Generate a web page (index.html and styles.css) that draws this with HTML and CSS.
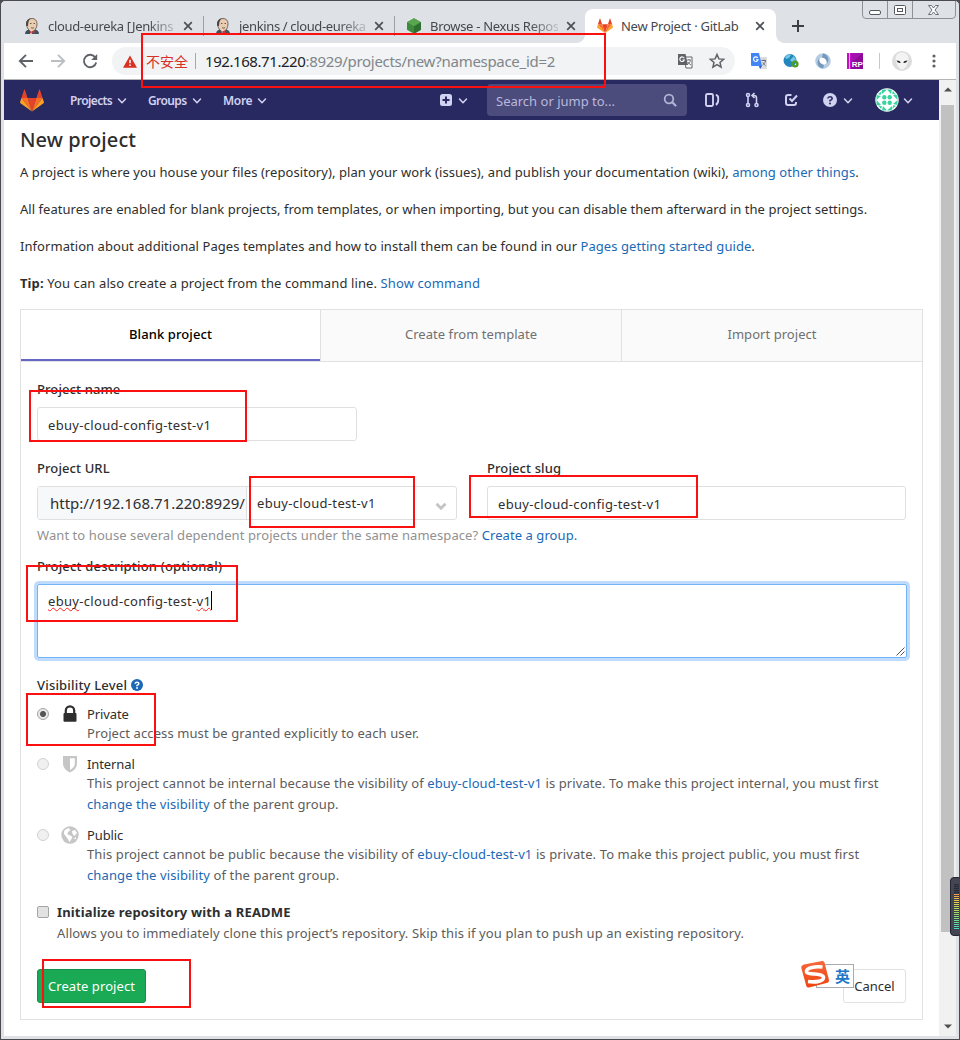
FILE: index.html
```html
<!DOCTYPE html>
<html lang="en">
<head>
<meta charset="utf-8">
<title>New Project · GitLab</title>
<link rel="stylesheet" href="styles.css">
</head>
<body>
<svg class="defs" width="0" height="0">
  <defs>
    <symbol id="close" viewBox="0 0 10 10"><path d="M1.2 1.2l7.6 7.6M8.8 1.2L1.2 8.8" stroke="#4d5156" stroke-width="1.7" fill="none"/></symbol>
    <symbol id="chev" viewBox="0 0 10 8"><path d="M1.5 2L5 5.7 8.500 2" fill="none" stroke="#d1d1f0" stroke-width="1.5" stroke-linecap="round" stroke-linejoin="round"/></symbol>
    <symbol id="tanuki" viewBox="0 0 24 23">
      <path d="M12 22.500L7.600 9h8.800z" fill="#e24329"/>
      <path d="M12 22.500L7.600 9H1.400z" fill="#fc6d26"/><path d="M12 22.500L16.400 9h6.200z" fill="#fc6d26"/>
      <path d="M1.400 9L.1 13.200c-.1.400 0 .8.400 1L12 22.500z" fill="#fca326"/><path d="M22.600 9l1.300 4.200c.1.400 0 .8-.4 1L12 22.500z" fill="#fca326"/>
      <path d="M1.400 9h6.200L4.900.7c-.1-.4-.7-.4-.8 0z" fill="#e24329"/><path d="M22.600 9h-6.200L19.100.7c.1-.4.7-.4.8 0z" fill="#e24329"/>
    </symbol>
    <symbol id="butler" viewBox="0 0 16 16">
      <path d="M1 16c0-3 2-4 4-4.500h6c2 .5 4 1.500 4 4.500z" fill="#3d5260"/>
      <path d="M2.500 5.500C2.500 2 5 .5 8 .5s5 2 5 5c0 4-2 8-5 8s-5.500-4-5.500-8z" fill="#e9cdb0" stroke="#5b4b42" stroke-width=".8"/>
      <path d="M2.300 8C1.500 4 3 1 7 .5 4.500 2 4.500 4 4 8z" fill="#4c4644"/>
      <path d="M6 5.500h1.500M9.500 5.500H11M7 9.500c1 .8 2 .8 3 0" stroke="#5b4b42" stroke-width=".9" fill="none"/>
      <path d="M6 12.500h2v3L6 16z" fill="#f4f4f4"/><path d="M8 13.500l2.500-1.200v3L8 14.500l-2 1v-2.500z" fill="#d33833"/>
    </symbol>
    <symbol id="translate" viewBox="0 0 16 16">
      <path d="M7 4h8v11H9z" fill="#fff" stroke="#5f6368"/><path d="M1 1h7.500L11 12H1z" fill="#5f6368"/>
      <path d="M7.200 5.200A2.300 2.300 0 1 0 7.300 7H5.500" fill="none" stroke="#fff" stroke-width="1.100"/>
      <path d="M10 7h4M12 6v1M13.500 7.500c-.5 2-1.500 3-3 4M11 9c.7 1.500 1.500 2 3 3" fill="none" stroke="#5f6368" stroke-width=".9"/>
    </symbol>
  </defs>
</svg>

<div class="window">
  <header class="tabstrip">
    <div class="tab"><svg class="fav"><use href="#butler"/></svg><span class="tab-title fade t1">cloud-eureka [Jenkins</span><svg class="x"><use href="#close"/></svg></div>
    <div class="tab"><svg class="fav"><use href="#butler"/></svg><span class="tab-title fade t2">jenkins / cloud-eureka</span><svg class="x"><use href="#close"/></svg></div>
    <div class="tab last"><svg class="fav" viewBox="0 0 16 16"><path d="M8 .3l7 4v7.400l-7 4-7-4V4.300z" fill="#3f8b3d"/><path d="M8 .3l7 4-7 4-7-4z" fill="#59a64f"/><path d="M8 8.300l7-4v7.400l-7 4z" fill="#2f6f32"/></svg><span class="tab-title fade t3">Browse - Nexus Repos</span><svg class="x"><use href="#close"/></svg></div>
    <div class="tab active"><svg class="fav"><use href="#tanuki"/></svg><span class="tab-title t4">New Project · GitLab</span><svg class="x"><use href="#close"/></svg></div>
    <svg class="plus" viewBox="0 0 12 12"><path d="M6 0v12M0 6h12" stroke="#3c4043" stroke-width="2"/></svg>
    <svg class="winbtns" viewBox="0 0 94 18">
      <path d="M.5 0v14q0 3.500 3.500 3.500h86q3.500 0 3.500-3.500V0M25.500 0v17.500M50.500 0v17.500" fill="none" stroke="#8d9197"/>
      <rect x="7.500" y="9.500" width="11" height="4" rx="1.500" fill="#fff" stroke="#55585e"/>
      <rect x="32.500" y="4.500" width="11" height="9" rx="1" fill="#fff" stroke="#55585e"/><rect x="35.500" y="7.500" width="5" height="3" fill="#fff" stroke="#55585e"/>
      <path d="M66.500 4.500h3l2 2.500 2-2.500h3l-3.500 4.500 3.500 4.500h-3l-2-2.500-2 2.500h-3L70 9z" fill="#fff" stroke="#6b6e74"/>
    </svg>
  </header>

  <div class="toolbar">
    <svg class="nav-i" viewBox="0 0 16 16"><path d="M15 8H2M8 1.800L1.800 8 8 14.200" fill="none" stroke="#5f6368" stroke-width="1.900"/></svg>
    <svg class="nav-i" viewBox="0 0 16 16"><path d="M1 8h13M8 1.800L14.200 8 8 14.200" fill="none" stroke="#bcbfc2" stroke-width="1.900"/></svg>
    <svg class="nav-i" viewBox="0 0 16 16"><path d="M13.300 4.500A6.200 6.200 0 1 0 14.200 9.500" fill="none" stroke="#5f6368" stroke-width="1.900"/><path d="M15.200 1v6H9.200z" fill="#5f6368"/></svg>
    <div class="omnibox">
      <svg class="warn" viewBox="0 0 16 14"><path d="M8 0l8 14H0z" fill="#d93025"/><path d="M8 5v4M8 10.500v1.700" stroke="#fff" stroke-width="1.700"/></svg>
      <span class="insecure">不安全</span><i class="sep"></i>
      <span class="url"><b>192.168.71.220</b>:8929/projects/new?namespace_id=2</span>
      <svg class="tr"><use href="#translate"/></svg>
      <svg class="star" viewBox="0 0 16 16"><path d="M8 1.500l1.900 4.400 4.700.4-3.600 3.100 1.100 4.700L8 11.600l-4.100 2.500L5 9.400 1.400 6.300l4.700-.4z" fill="none" stroke="#5f6368" stroke-width="1.500"/></svg>
    </div>
    <div class="exts">
      <svg viewBox="0 0 16 16"><path d="M7 4h9v12H9z" fill="#dadce0"/><path d="M0 0h8l3 13H1a1 1 0 0 1-1-1z" fill="#4285f4"/><path d="M8 13h3l-2 3z" fill="#2a56c6"/><path d="M6.800 5A2.300 2.300 0 1 0 7 6.800H5" fill="none" stroke="#fff" stroke-width="1.100"/><path d="M10.500 7.500H15M13 6.500v1M14.500 8c-.5 2-1.500 3-3 4M12 9.500c.5 1.500 1.300 2 2.500 3" fill="none" stroke="#68727c"/></svg>
      <svg viewBox="0 0 16 16"><circle cx="7" cy="7.500" r="6.500" fill="#2187bd"/><path d="M2 4q4-4 6-2L6 5 3 6zM7 7l4-4 2 4-3 3z" fill="#74c6e5"/><circle cx="12" cy="11" r="2.400" fill="none" stroke="#4f9b20" stroke-width="2.400"/></svg>
      <svg viewBox="0 0 16 16"><circle cx="8" cy="8" r="5.800" fill="none" stroke="#b4cbe2" stroke-width="4"/><path d="M8 .5c5 1 7 6 4 10q0-5-5-6zM8 15.500C3 14.500 1 10 4 5.500q0 5 5 6.500z" fill="#7397bd"/></svg>
      <svg viewBox="0 0 16 16"><path d="M0 0h16v16H0z" fill="#c410c4"/><path d="M4 0h12v16H4z" fill="#8d0a99"/><path d="M4 0h12L4 10z" fill="#a312ad"/><path d="M2.500 0v16" stroke="#f5a8f5"/><text x="4.700" y="14" class="rp">RP</text></svg>
    </div>
    <i class="sep tsep"></i>
    <svg class="alien" viewBox="0 0 20 20"><circle cx="10" cy="10" r="10" fill="#dcdcdc"/><path d="M3.500 8C3.500 3 7 1.500 10 1.500S16.500 3 16.500 8c0 5-4 10.500-6.500 10.500S3.500 13 3.500 8z" fill="#f3f3f3"/><path d="M4.500 9.500q3.500 0 4.200 2.300-3.400.5-4.200-2.300zM15.500 9.500q-3.500 0-4.200 2.300 3.400.5 4.200-2.300z" fill="#222"/></svg>
    <svg class="dots" viewBox="0 0 4 14"><circle cx="2" cy="2" r="1.600"/><circle cx="2" cy="7" r="1.600"/><circle cx="2" cy="12" r="1.600"/></svg>
  </div>

  <div class="viewport">
    <div class="page">
      <nav class="navbar">
        <svg class="logo"><use href="#tanuki"/></svg>
        <div class="menu m1"><span>Projects</span><svg class="chev"><use href="#chev"/></svg></div>
        <div class="menu m2"><span>Groups</span><svg class="chev"><use href="#chev"/></svg></div>
        <div class="menu m3"><span>More</span><svg class="chev"><use href="#chev"/></svg></div>
        <div class="menu add"><svg width="12" height="12" viewBox="0 0 12 12"><rect width="12" height="12" rx="2.500" fill="#d1d1f0"/><path d="M6 2.500v7M2.500 6h7" stroke="#292961" stroke-width="2"/></svg><svg class="chev"><use href="#chev"/></svg></div>
        <div class="search"><span>Search or jump to...</span><svg width="14" height="14" viewBox="0 0 14 14"><circle cx="6" cy="6" r="4.300" fill="none" stroke="#b3b3d6" stroke-width="1.800"/><path d="M9.300 9.300L12.500 12.500" stroke="#b3b3d6" stroke-width="2.200" stroke-linecap="round"/></svg></div>
        <div class="nav-icons">
          <svg viewBox="0 0 16 16"><path d="M3.500 2h4A1.500 1.500 0 0 1 9 3.500v9A1.500 1.500 0 0 1 7.500 14h-4A1.500 1.500 0 0 1 2 12.500v-9A1.500 1.500 0 0 1 3.500 2z" fill="none" stroke="#d1d1f0" stroke-width="1.900"/><path d="M11.800 3q2.400.3 2.400 3v2q0 3.500-2.400 4.800" fill="none" stroke="#d1d1f0" stroke-width="1.900"/></svg>
          <svg viewBox="0 0 16 16"><g fill="none" stroke="#d1d1f0" stroke-width="1.600"><circle cx="4" cy="3" r="1.500"/><circle cx="4" cy="13" r="1.500"/><circle cx="12.500" cy="13" r="1.500"/><path d="M4 4.500v7M12.500 11.500V6q0-2.500-2.500-2.500H8M10.500 1L8 3.500 10.500 6"/></g></svg>
          <svg viewBox="0 0 16 16"><path d="M8.500 3H5Q3 3 3 5v6q0 2 2 2h6q2 0 2-2v-1" fill="none" stroke="#d1d1f0" stroke-width="2"/><path d="M6.500 6.500L9 9l5-5.500" fill="none" stroke="#d1d1f0" stroke-width="2"/></svg>
        </div>
        <div class="menu help"><svg width="14" height="14" viewBox="0 0 14 14"><circle cx="7" cy="7" r="7" fill="#d1d1f0"/><path d="M4.800 5.500Q5 3.700 7 3.700t2.200 1.700Q9.200 6.500 7 7.500v1" fill="none" stroke="#292961" stroke-width="1.600"/><circle cx="7" cy="10.500" r="1" fill="#292961"/></svg><svg class="chev"><use href="#chev"/></svg></div>
        <div class="menu user"><svg width="24" height="24" viewBox="0 0 24 24"><circle cx="12" cy="12" r="11.700" fill="#fff"/><g fill="#38d39f"><circle cx="9.300" cy="9.300" r="2.200"/><circle cx="14.700" cy="9.300" r="2.200"/><circle cx="9.300" cy="14.700" r="2.200"/><circle cx="14.700" cy="14.700" r="2.200"/><path d="M7 1.500h5L7 6zM12 1.500h5l-1 4.500zM22.500 7v5L18 7zM22.500 12v5L18 16zM17 22.500h-5l5-4.500zM12 22.500H7L8 18zM1.500 17v-5L6 17zM1.500 12V7L6 8zM3 6l4-3-1.500 4zM18 3l3 4-4-1.500zM21 18l-4 3 1.500-4zM6 21l-3-4 4 1.500z"/></g></svg><svg class="chev"><use href="#chev"/></svg></div>
      </nav>

      <main class="content">
        <h1>New project</h1>
        <p class="p1">A project is where you house your files (repository), plan your work (issues), and publish your documentation (wiki), <a>among other things</a>.</p>
        <p class="p2">All features are enabled for blank projects, from templates, or when importing, but you can disable them afterward in the project settings.</p>
        <p class="p3">Information about additional Pages templates and how to install them can be found in our <a>Pages getting started guide</a>.</p>
        <p class="p4"><b>Tip:</b> You can also create a project from the command line. <a>Show command</a></p>

        <section class="panel">
          <div class="ptabs">
            <div class="ptab on">Blank project</div><div class="ptab">Create from template</div><div class="ptab">Import project</div>
          </div>
          <form class="form">
            <div class="label">Project name</div>
            <div class="input name slug">ebuy-cloud-config-test-v1</div>
            <div class="cols">
              <div class="col">
                <div class="label">Project URL</div>
                <div class="input group"><span class="prefix">http://192.168.71.220:8929/</span><span class="ns slug">ebuy-cloud-test-v1</span><svg class="caret" viewBox="0 0 12 9"><path d="M1.500 1.800L6 6.300l4.500-4.500" fill="none" stroke="#c4c4c4" stroke-width="2.800"/></svg></div>
              </div>
              <div class="col">
                <div class="label">Project slug</div>
                <div class="input slug">ebuy-cloud-config-test-v1</div>
              </div>
            </div>
            <div class="hint">Want to house several dependent projects under the same namespace? <a>Create a group.</a></div>
            <div class="label desc">Project description (optional)</div>
            <div class="area slug"><span class="typed"><u>ebuy</u>-cloud-config-test-<u>v1</u></span><i class="cursor"></i><svg class="grip" viewBox="0 0 9 9"><path d="M.5 8.500l8-8M4.500 8.500l4-4" stroke="#555" fill="none"/></svg></div>
            <div class="label vis">Visibility Level <svg width="12" height="12" viewBox="0 0 14 14"><circle cx="7" cy="7" r="7" fill="#1b69b6"/><path d="M4.800 5.500Q5 3.700 7 3.700t2.200 1.700Q9.200 6.500 7 7.500v1" fill="none" stroke="#fff" stroke-width="1.700"/><circle cx="7" cy="10.500" r="1.100" fill="#fff"/></svg></div>

            <div class="option">
              <i class="radio checked"></i>
              <svg class="oi" viewBox="0 0 18 18"><path d="M4.800 9V5.500a4.200 4.200 0 0 1 8.400 0V9" fill="none" stroke="#2e2e2e" stroke-width="2.200"/><rect x="2.500" y="8" width="13" height="8.700" rx="1" fill="#2e2e2e"/></svg>
              <div><div class="ot">Private</div><div class="od">Project access must be granted explicitly to each user.</div></div>
            </div>
            <div class="option">
              <i class="radio"></i>
              <svg class="oi" viewBox="0 0 18 18"><path d="M2 1h14v8q0 5-7 8.500Q2 14 2 9z" fill="#c6c6c6"/><path d="M9 3.200h4.800V9q0 3-4.800 6z" fill="#fff"/></svg>
              <div><div class="ot">Internal</div><div class="od">This project cannot be internal because the visibility of <a>ebuy-cloud-test-v1</a> is private. To make this project internal, you must first<br><a>change the visibility</a> of the parent group.</div></div>
            </div>
            <div class="option">
              <i class="radio"></i>
              <svg class="oi" viewBox="0 0 18 18"><circle cx="9" cy="9" r="8.700" fill="#c6c6c6"/><path d="M3 5.500l1.500-2L7.500 2l2 2L7 6l-.5 2.500 3 1 2 1.500-1 2-2 3-2-3.500L3 8zM11 5l3-1 2 3-2.500 3-2-2zM12.500 13l2.500-2v2z" fill="#fff"/></svg>
              <div><div class="ot">Public</div><div class="od o3">This project cannot be public because the visibility of <a>ebuy-cloud-test-v1</a> is private. To make this project public, you must first<br><a>change the visibility</a> of the parent group.</div></div>
            </div>
            <div class="option readme">
              <i class="check"></i>
              <div><div class="rt">Initialize repository with a README</div><div class="od o3">Allows you to immediately clone this project’s repository. Skip this if you plan to push up an existing repository.</div></div>
            </div>
            <div class="actions"><span class="btn create">Create project</span><span class="btn cancel">Cancel</span></div>
          </form>
        </section>
      </main>
    </div>
    <div class="scroll">
      <svg width="8" height="5" viewBox="0 0 8 5"><path d="M0 4.500h8L4 .5z" fill="#505050"/></svg>
      <i class="thumb"></i>
      <svg width="8" height="5" viewBox="0 0 8 5"><path d="M0 .5h8L4 4.500z" fill="#505050"/></svg>
    </div>
  </div>
</div>

<i class="mark k1"></i><i class="mark k2"></i><i class="mark k3"></i><i class="mark k4"></i><i class="mark k5"></i><i class="mark k6"></i><i class="mark k7"></i>

<div class="ime"><span>英</span></div>
<svg class="sogou" viewBox="0 0 30 30"><defs><linearGradient id="sg" x1="0" y1="0" x2="0" y2="1"><stop offset="0" stop-color="#f5683c"/><stop offset="1" stop-color="#ee4410"/></linearGradient></defs><path d="M4 4.500L22 1q2-.3 2.500 1.500L29 20q.3 2-1.500 2.800L9 27.500q-2 .3-2.700-1.500L1.300 8Q1 5.500 4 4.500z" fill="url(#sg)"/><path d="M22.500 7C15 6 6.500 8 6.500 11.500c0 4 17 1 17 6 0 4-8 5-15.500 4" fill="none" stroke="#fff" stroke-width="3.600"/></svg>
<div class="meter"><i class="bars"></i></div>
</body>
</html>
```

FILE: styles.css
```css
* { box-sizing: border-box; }
body { margin: 0; width: 960px; height: 1040px; position: relative; overflow: hidden; font-family: "Noto Sans", "Noto Sans CJK SC", sans-serif; font-size: 13px; color: #2e2e2e; background: #4b4a4f; }
svg { display: block; flex: none; overflow: visible; }
i { display: block; flex: none; }
a { color: #1b69b6; }
.defs { position: absolute; }
.window { width: 960px; height: 1040px; border: 1px solid #4b4a4f; border-radius: 5px 5px 0 0; background: #dee1e6; padding: 0 3px 3px; display: flex; flex-direction: column; }

/* tab strip */
.tabstrip { height: 42px; padding-left: 9px; display: flex; align-items: flex-end; position: relative; flex: none; }
.tab { width: 191px; padding: 0 10px 0 11px; display: flex; align-items: center; position: relative; color: #45484c; border-right: 1px solid #9da0a5; height: 20px; margin-bottom: 7px; }
.tab.last { border-right-color: transparent; }
.tab.active { height: 34px; margin: 0 0 0 -1px; background: #fff; border: 0; border-radius: 8px 8px 0 0; padding-left: 12px; }
.tab.active::before, .tab.active::after { content: ""; position: absolute; bottom: 0; width: 8px; height: 8px; }
.tab.active::before { left: -8px; background: radial-gradient(circle at 0 0, transparent 7.500px, #fff 8px); }
.tab.active::after { right: -8px; background: radial-gradient(circle at 100% 0, transparent 7.500px, #fff 8px); }
.fav { width: 16px; height: 16px; margin-right: 8px; }
.tab-title { width: 128px; white-space: nowrap; line-height: 20px; }
.t1 { letter-spacing: -.33px; }
.t2 { letter-spacing: -.36px; }
.t3 { letter-spacing: -.3px; }
.t4 { letter-spacing: -.27px; }
.fade { -webkit-mask-image: linear-gradient(90deg, #000 100px, transparent 134px); mask-image: linear-gradient(90deg, #000 100px, transparent 134px); }
.x { width: 10px; height: 10px; margin-left: 8px; }
.active .x { margin-left: 6px; }
.plus { width: 12px; height: 12px; margin: 0 0 11px 16px; }
.winbtns { position: absolute; right: 0; top: 0; width: 94px; height: 18px; }

/* toolbar */
.toolbar { height: 37px; background: #fff; display: flex; align-items: center; padding-left: 14px; border-bottom: 1px solid #b4b5b7; flex: none; }
.nav-i { width: 16px; height: 16px; margin-right: 16px; }
.omnibox { width: 623px; height: 28px; margin-left: -2px; border-radius: 14px; background: #f1f3f4; display: flex; align-items: center; padding-left: 11px; }
.warn { width: 14px; height: 13px; margin-right: 9px; }
.insecure { font-family: "Noto Sans CJK SC", sans-serif; font-size: 14px; color: #d93025; width: 49px; }
.sep { width: 1px; height: 16px; background: #a4a7ab; }
.url { font-size: 15px; color: #80868b; margin-left: 9px; width: 472px; white-space: nowrap; letter-spacing: -.3px; line-height: 20px; margin-top: -1px; }
.url b { font-weight: 400; color: #202124; letter-spacing: -.43px; }
.tr { width: 16px; height: 16px; margin-right: 16px; }
.star { width: 16px; height: 16px; }
.exts { display: flex; gap: 16px; margin-left: 16px; }
.exts svg { width: 16px; height: 16px; }
.rp { font: bold 8px "Liberation Sans", sans-serif; fill: #fff; }
.tsep { margin-left: 16px; background: #c5c7ca; }
.alien { width: 20px; height: 20px; margin-left: 12px; }
.dots { width: 4px; height: 14px; fill: #5f6368; margin-left: 20px; }

/* page */
.viewport { flex: 1; display: flex; background: #fff; min-height: 0; }
.page { width: 935px; }
.navbar { height: 40px; background: #292961; display: flex; align-items: center; padding-left: 16px; color: #d1d1f0; }
.logo { width: 24px; height: 23px; margin-right: 26px; }
.menu { display: flex; align-items: center; justify-content: space-between; font-weight: 600; font-size: 12px; }
.menu span { line-height: 18px; margin-top: 1px; letter-spacing: -.6px; }
.menu .chev { margin-top: 1px; }
.chev { width: 10px; height: 8px; }
.m1 { width: 57px; margin-right: 21px; }
.m2 { width: 54px; margin-right: 21px; }
.m3 { width: 44px; }
.m3 span { letter-spacing: -.3px; }
.add { width: 28px; margin-left: 173px; }
.search { width: 200px; height: 32px; margin-left: 19px; border-radius: 4px; background: #4b4b7c; color: #b9b9dc; padding: 0 10px 0 9px; display: flex; align-items: center; justify-content: space-between; }
.search span { margin-top: 2px; }
.nav-icons { display: flex; gap: 23.500px; margin-left: 17px; }
.nav-icons svg { width: 16px; height: 16px; }
.help { width: 30px; margin-left: 24px; }
.user { width: 38px; margin-left: 22px; }

.content { padding: 9px 16px 0; }
h1 { margin: 0 0 11px; font-size: 20px; font-weight: 500; line-height: 22px; letter-spacing: .1px; }
p { margin: 0 0 16px; line-height: 21px; white-space: nowrap; }
.p1 { letter-spacing: .067px; }
.p2 { letter-spacing: .045px; }
.p3 { letter-spacing: .058px; }
.p4 { letter-spacing: .11px; }
.panel { width: 903px; height: 711px; margin-top: -1px; border: 1px solid #e1e1e1; }
.ptabs { display: grid; grid-template-columns: 299px 301px 301px; height: 52px; border-bottom: 1px solid #e1e1e1; }
.ptab { text-align: center; line-height: 48px; color: #707070; background: #fafafa; border-left: 1px solid #e1e1e1; letter-spacing: .05px; }
.ptab.on { background: #fff; color: #000; font-weight: 500; border-left: 0; border-bottom: 2px solid #6666c4; letter-spacing: .1px; }
.form { padding: 17px 16px 0; }
.label { height: 20px; line-height: 20px; font-weight: 500; margin-bottom: 8px; letter-spacing: .1px; }
.desc { letter-spacing: .18px; }
.input { height: 34px; border: 1px solid #dfdfdf; border-radius: 3px; padding: 1px 10px 0; line-height: 33px; white-space: nowrap; }
.slug { letter-spacing: .32px; }
.name { width: 320px; margin-bottom: 17px; }
.cols { display: grid; grid-template-columns: 420px 419px; gap: 30px; }
.group { display: flex; padding: 0; align-items: center; }
.prefix { width: 209px; height: 32px; padding-left: 12px; background: #f7f8fa; border-right: 1px solid #dfdfdf; font-size: 15px; line-height: 32px; }
.ns { flex: 1; padding-left: 10px; line-height: 32px; }
.caret { width: 12px; height: 9px; margin: 6px 9px 0 0; }
.hint { margin: 5px 0 10px; line-height: 21px; color: #919191; white-space: nowrap; letter-spacing: .075px; }
.area { height: 75px; width: 870px; border: 1px solid #73b3f8; border-radius: 2px; box-shadow: 0 0 0 3px #bfdcfe; padding: 6px 10px; line-height: 20px; display: flex; position: relative; height: 74px; margin-bottom: 17px; }
.area u { text-decoration: underline wavy #f22 1px; text-underline-offset: 1px; text-decoration-skip-ink: none; }
.cursor { width: 1px; height: 19px; background: #000; }
.grip { position: absolute; right: 1px; bottom: 1px; width: 9px; height: 9px; }
.vis { display: flex; align-items: center; gap: 4px; margin-bottom: 9px; letter-spacing: .19px; }
.option { display: flex; margin-bottom: 10px; white-space: nowrap; }
.radio { width: 12px; height: 12px; border-radius: 50%; border: 1px solid #d2d2d2; background: #f0f0f0; margin: 4px 12px 0 0; }
.radio.checked { border-color: #a5a5a5; background: radial-gradient(circle, #555 2.500px, #e8e8e8 3.500px); }
.oi { width: 18px; height: 18px; margin: 1px 8px 0 0; }
.ot { line-height: 20px; height: 19px; letter-spacing: -.1px; }
.od { line-height: 21px; color: #5c5c5c; letter-spacing: .097px; }
.o3 { letter-spacing: .112px; }
.readme { padding-top: 6px; margin-bottom: 25px; }
.check { width: 12px; height: 12px; border: 1px solid #a5a5a5; border-radius: 2px; background: #e2e2e2; margin: 4px 8px 0 0; }
.rt { line-height: 21px; font-weight: 700; letter-spacing: .16px; }
.actions { display: flex; justify-content: space-between; }
.btn { height: 34px; line-height: 33px; border-radius: 3px; text-align: center; }
.create { width: 109px; background: #1aaa55; border: 1px solid #168f48; color: #fff; letter-spacing: .08px; }
.cancel { width: 63px; border: 1px solid #e1e1e1; }

.scroll { width: 17px; background: #f1f1f1; display: flex; flex-direction: column; align-items: center; padding: 7px 0 7px; }
.thumb { width: 13px; height: 827px; background: #c1c1c1; margin: 13px 0 auto; }

/* annotation frames */
.mark { position: absolute; border: 2px solid #fa1010; }
.k1 { left: 141px; top: 33px; width: 465px; height: 55px; }
.k2 { left: 29px; top: 390px; width: 218px; height: 52px; }
.k3 { left: 249px; top: 476px; width: 166px; height: 52px; }
.k4 { left: 469px; top: 475px; width: 229px; height: 43px; }
.k5 { left: 26px; top: 565px; width: 212px; height: 57px; }
.k6 { left: 26px; top: 693px; width: 130px; height: 53px; }
.k7 { left: 42px; top: 959px; width: 149px; height: 49px; }

/* floating desktop widgets */
.ime { position: absolute; left: 816px; top: 964px; width: 38px; height: 24px; background: #fff; border: 1px solid #a9abb0; text-align: right; padding-right: 3px; font: bold 15px/22px "Noto Sans CJK SC", sans-serif; color: #2176c7; }
.sogou { position: absolute; left: 800px; top: 960px; width: 30px; height: 30px; }
.meter { position: absolute; left: 950px; top: 877px; width: 12px; height: 59px; border: 1px solid #23242f; border-radius: 4px; background: #434654; padding: 6px 0 0 3px; }
.bars { width: 5px; height: 46px; background: repeating-linear-gradient(180deg, transparent 0 1px, #3a3d4c 1px 2px), linear-gradient(180deg, #2b2c38 0 10px, #f79a45 10px, #e8d64a 18px, #a6de62 28px, #40dcc0 46px); }
```
